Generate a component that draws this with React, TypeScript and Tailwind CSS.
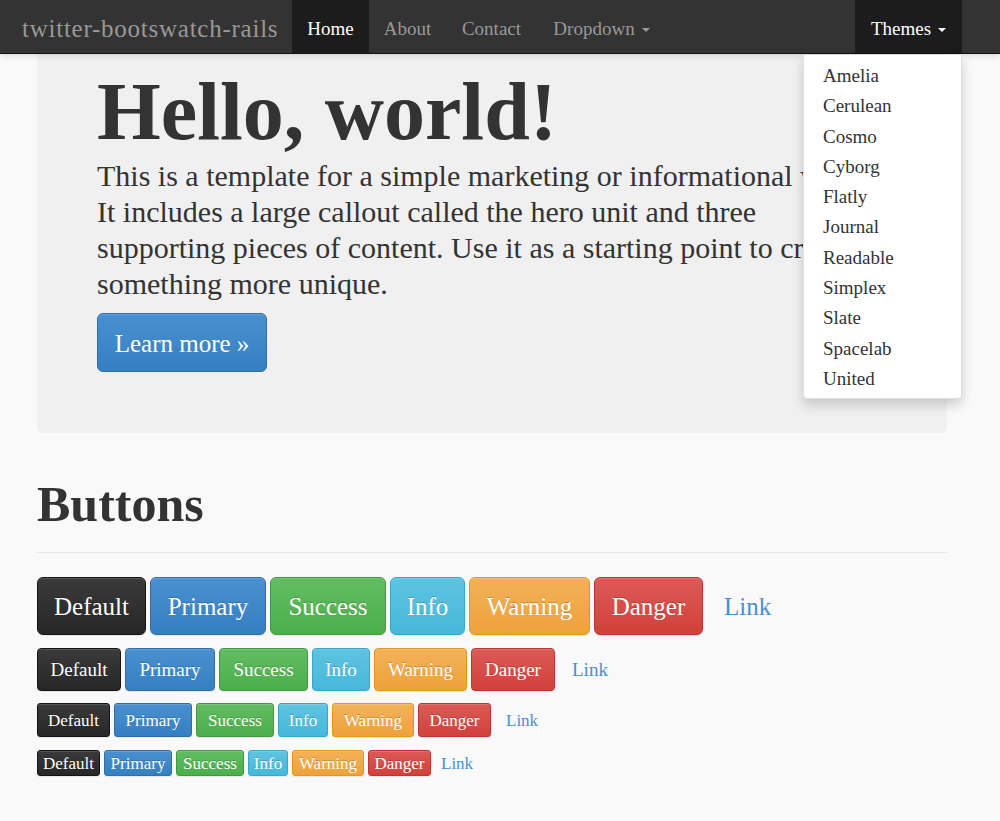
import React from "react";

const variants = [
  { label: "Default", cls: "bg-linear-to-b from-[#3a3a3a] to-[#272727] border-[#141414]" },
  { label: "Primary", cls: "bg-linear-to-b from-[#4a90d0] to-[#3480c1] border-[#2f6fa8]" },
  { label: "Success", cls: "bg-linear-to-b from-[#62bd62] to-[#4bae4b] border-[#3f9a3f]" },
  { label: "Info", cls: "bg-linear-to-b from-[#5fc3e0] to-[#46b8da] border-[#34a8cc]" },
  { label: "Warning", cls: "bg-linear-to-b from-[#f2b158] to-[#eea23a] border-[#e3951f]" },
  { label: "Danger", cls: "bg-linear-to-b from-[#dc5a56] to-[#d2403b] border-[#bd3430]" },
];

const rows = [
  {
    box: "h-[58px] text-[25px] rounded-[6px] pt-[2px]",
    widths: ["w-[109px]", "w-[116px]", "w-[116px]", "w-[75px]", "w-[121px]", "w-[109px]"],
    link: "h-[58px] text-[25px] px-[17px] pt-[2px]",
    mt: "mt-[24px]",
  },
  {
    box: "h-[43px] text-[19px] rounded-[4px] pt-[1px]",
    widths: ["w-[84px]", "w-[90px]", "w-[89px]", "w-[58px]", "w-[93px]", "w-[84px]"],
    link: "h-[43px] text-[19px] px-[13px] pt-[1px]",
    mt: "mt-[13px]",
  },
  {
    box: "h-[34px] text-[17px] rounded-[3px] pt-[1px]",
    widths: ["w-[73px]", "w-[78px]", "w-[78px]", "w-[50px]", "w-[82px]", "w-[73px]"],
    link: "h-[34px] text-[17px] px-[11px] pt-[1px]",
    mt: "mt-[12px]",
  },
  {
    box: "h-[26px] text-[17px] rounded-[3px] pt-[1px]",
    widths: ["w-[63px]", "w-[68px]", "w-[68px]", "w-[40px]", "w-[72px]", "w-[63px]"],
    link: "h-[26px] text-[17px] px-[6px] pt-[1px]",
    mt: "mt-[13px]",
  },
];

const themes = [
  "Amelia",
  "Cerulean",
  "Cosmo",
  "Cyborg",
  "Flatly",
  "Journal",
  "Readable",
  "Simplex",
  "Slate",
  "Spacelab",
  "United",
];

function Caret({ color }: { color: string }) {
  return (
    <span
      className={`ml-[7px] inline-block w-0 h-0 border-x-[4px] border-x-transparent border-t-[4px] ${color} translate-y-[1px]`}
    />
  );
}

export default function App() {
  return (
    <div className="min-h-[821px] bg-[#f9f9f9] font-['Liberation_Serif','Times_New_Roman',serif] text-[#333]">
      {/* Navbar */}
      <div className="relative z-10 h-[54px] bg-[#333333] border-b border-[#121212] shadow-[0_2px_6px_rgba(0,0,0,0.12)] flex items-stretch">
        <div className="w-[292px] pl-[22px] pt-[4px] flex items-center text-[25px] tracking-[0.75px] text-[#999999]">
          twitter-bootswatch-rails
        </div>
        <div className="flex items-stretch text-[19px]">
          <div className="w-[77px] pt-[5px] flex items-center justify-center bg-[#1c1c1c] text-white">Home</div>
          <div className="w-[77px] pt-[5px] flex items-center justify-center text-[#999999]">About</div>
          <div className="w-[91px] pt-[5px] flex items-center justify-center text-[#999999]">Contact</div>
          <div className="w-[129px] pt-[5px] flex items-center justify-center text-[#999999]">
            Dropdown
            <Caret color="border-t-[#999999]" />
          </div>
        </div>
        <div className="ml-auto mr-[38px] w-[107px] pt-[5px] flex items-center justify-center bg-[#1c1c1c] text-white text-[19px]">
          Themes
          <Caret color="border-t-white" />
        </div>
        {/* Dropdown menu */}
        <div className="absolute top-[55px] right-[38px] w-[159px] bg-white border border-[rgba(0,0,0,0.12)] border-t-0 rounded-b-[4px] shadow-[0_6px_12px_rgba(0,0,0,0.175)] pt-[5px] pb-[5px]">
          {themes.map((t) => (
            <div key={t} className="h-[30.3px] leading-[30.3px] pl-[19px] pt-[1px] text-[19px] text-[#333]">
              {t}
            </div>
          ))}
        </div>
      </div>

      {/* Hero */}
      <div className="ml-[37px] w-[910px] bg-[#f0f0f0] rounded-b-[6px] pt-[13px] pb-[61px] px-[60px]">
        <h1 className="text-[82px] leading-[90px] font-bold text-[#333]">Hello, world!</h1>
        <p className="mt-[1px] text-[30px] leading-[36px] text-[#333] whitespace-nowrap">
          This is a template for a simple marketing or informational website.
          <br />
          It includes a large callout called the hero unit and three
          <br />
          supporting pieces of content. Use it as a starting point to create
          <br />
          something more unique.
        </p>
        <div className="mt-[11px] inline-flex items-center justify-center w-[170px] h-[59px] pt-[2px] rounded-[6px] border border-[#2f6fa8] bg-linear-to-b from-[#4a90d0] to-[#3480c1] text-white text-[25px] shadow-[inset_0_1px_0_rgba(255,255,255,0.15)]">
          Learn more »
        </div>
      </div>

      {/* Buttons section */}
      <div className="ml-[37px] w-[910px]">
        <h1 className="mt-[45px] text-[50px] leading-[53px] font-bold text-[#333]">Buttons</h1>
        <div className="mt-[21px] h-px bg-[#e6e6e6]" />
        {rows.map((row, ri) => (
          <div key={ri} className={`flex items-center gap-[4px] ${row.mt}`}>
            {variants.map((v, vi) => (
              <div
                key={v.label}
                className={`flex items-center justify-center border text-white ${row.box} ${row.widths[vi]} ${v.cls} shadow-[inset_0_1px_0_rgba(255,255,255,0.15),0_1px_1px_rgba(0,0,0,0.075)] [text-shadow:0_-1px_0_rgba(0,0,0,0.2)]`}
              >
                {v.label}
              </div>
            ))}
            <div className={`flex items-center text-[#4a8fd0] ${row.link}`}>Link</div>
          </div>
        ))}
      </div>
    </div>
  );
}
